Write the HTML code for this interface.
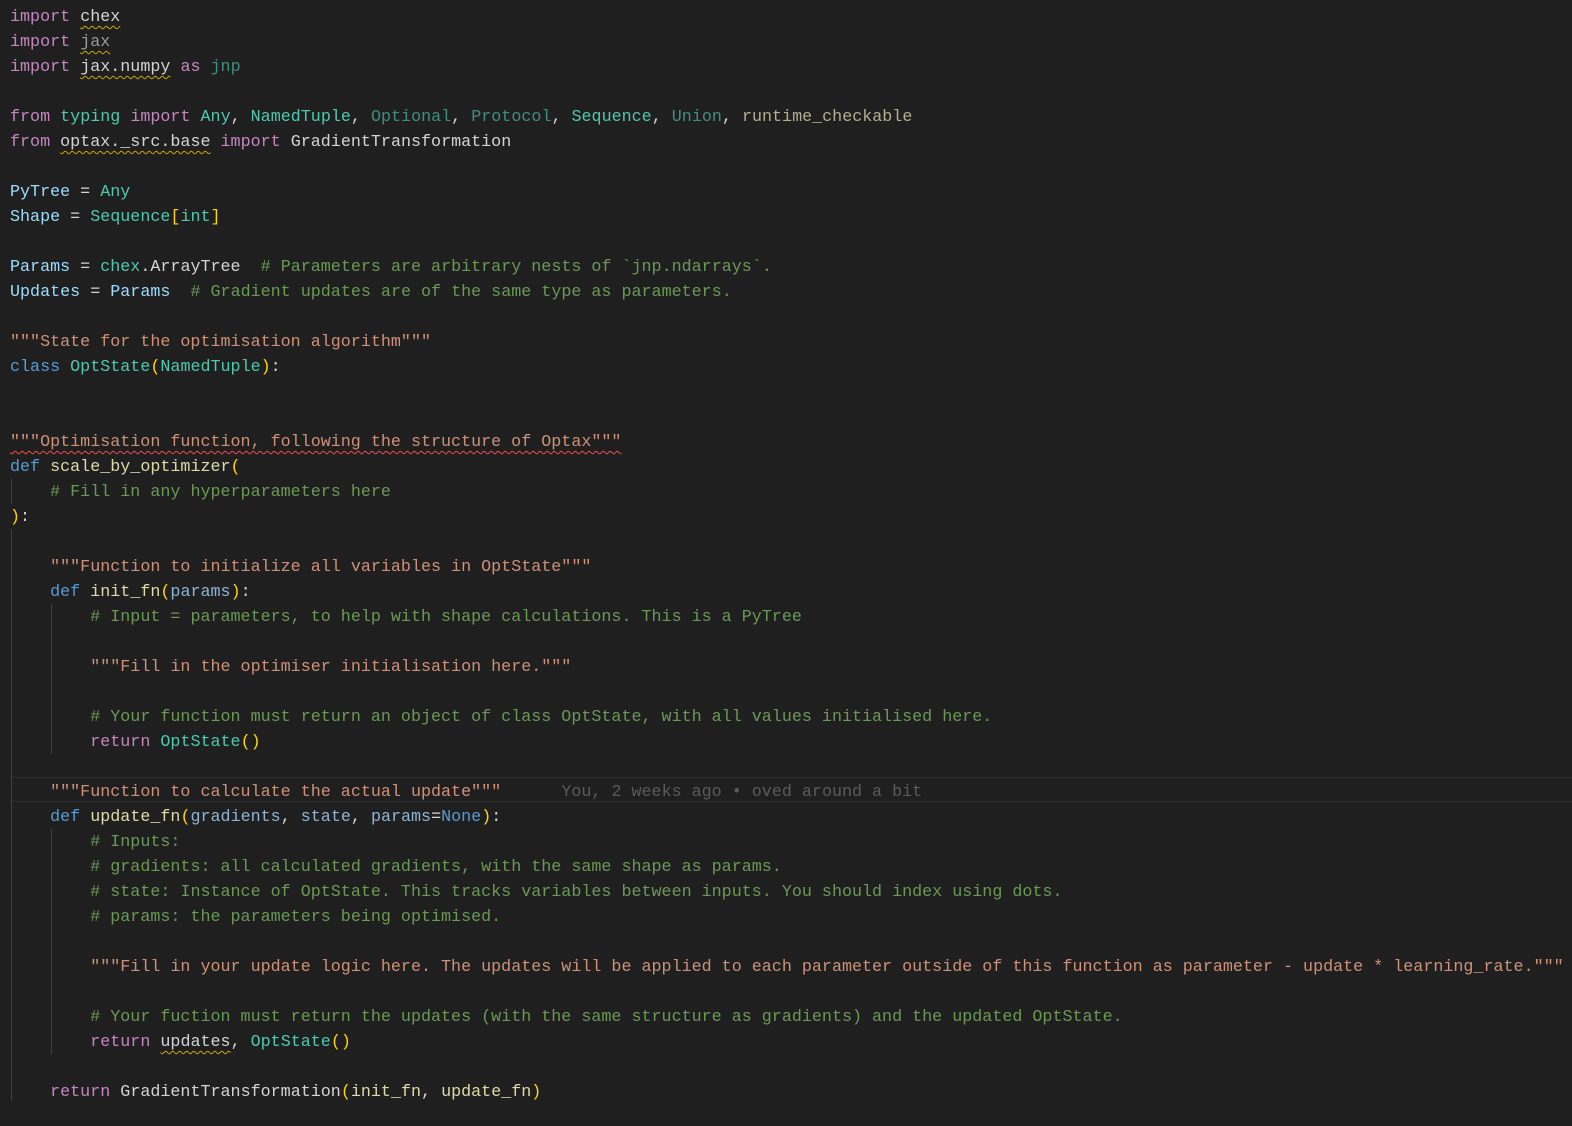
<!DOCTYPE html>
<html><head><meta charset="utf-8"><style>
body{margin:0;width:1572px;height:1126px;background:#1f1f1f;overflow:hidden;position:relative;font-family:"Liberation Mono",monospace;font-size:16.72px;color:#d4d4d4}
.c{position:absolute;left:10px;top:5px;white-space:pre;line-height:25px}
.k{color:#c586c0}.m{color:#4ec9b0}.md{color:#3f8f7e}.v{color:#9cdcfe}.s{color:#ce9178}.g{color:#6a9955}.f{color:#dcdcaa}.fd{color:#b0b090}
.b{color:#569cd6}.p{color:#ffd700}.dim{color:#9a9a9a}.pv{color:#8db4d4}
.w{text-decoration:underline wavy #cca700;text-decoration-thickness:1px;text-underline-offset:4px}
.r{text-decoration:underline wavy #f14c4c;text-decoration-thickness:1px;text-underline-offset:4px}
.gd{position:absolute;width:1px;background:#404040}
.hl{position:absolute;left:10px;right:0;top:777px;height:23px;border-top:1px solid #2c2c2c;border-bottom:1px solid #2c2c2c}
.bl{color:#5a5a5a}
</style></head><body>
<div class="hl"></div>
<div class="gd" style="left:11px;top:479px;height:25px"></div>
<div class="gd" style="left:11px;top:529px;height:572px"></div>
<div class="gd" style="left:51px;top:604px;height:150px"></div>
<div class="gd" style="left:51px;top:829px;height:225px"></div>
<div class="c"><span class="k">import</span> <span class="w">chex</span>
<span class="k">import</span> <span class="w dim">jax</span>
<span class="k">import</span> <span class="w">jax.numpy</span> <span class="k">as</span> <span class="md">jnp</span>

<span class="k">from</span> <span class="m">typing</span> <span class="k">import</span> <span class="m">Any</span>, <span class="m">NamedTuple</span>, <span class="md">Optional</span>, <span class="md">Protocol</span>, <span class="m">Sequence</span>, <span class="md">Union</span>, <span class="fd">runtime_checkable</span>
<span class="k">from</span> <span class="w">optax._src.base</span> <span class="k">import</span> GradientTransformation

<span class="v">PyTree</span> = <span class="m">Any</span>
<span class="v">Shape</span> = <span class="m">Sequence</span><span class="p">[</span><span class="m">int</span><span class="p">]</span>

<span class="v">Params</span> = <span class="m">chex</span>.ArrayTree  <span class="g"># Parameters are arbitrary nests of `jnp.ndarrays`.</span>
<span class="v">Updates</span> = <span class="v">Params</span>  <span class="g"># Gradient updates are of the same type as parameters.</span>

<span class="s">"""State for the optimisation algorithm"""</span>
<span class="b">class</span> <span class="m">OptState</span><span class="p">(</span><span class="m">NamedTuple</span><span class="p">)</span>:


<span class="s r">"""Optimisation function, following the structure of Optax"""</span>
<span class="b">def</span> <span class="f">scale_by_optimizer</span><span class="p">(</span>
    <span class="g"># Fill in any hyperparameters here</span>
<span class="p">)</span>:

    <span class="s">"""Function to initialize all variables in OptState"""</span>
    <span class="b">def</span> <span class="f">init_fn</span><span class="p">(</span><span class="pv">params</span><span class="p">)</span>:
        <span class="g"># Input = parameters, to help with shape calculations. This is a PyTree</span>

        <span class="s">"""Fill in the optimiser initialisation here."""</span>

        <span class="g"># Your function must return an object of class OptState, with all values initialised here.</span>
        <span class="k">return</span> <span class="m">OptState</span><span class="p">()</span>

    <span class="s">"""Function to calculate the actual update"""</span>      <span class="bl">You, 2 weeks ago • oved around a bit</span>
    <span class="b">def</span> <span class="f">update_fn</span><span class="p">(</span><span class="pv">gradients</span>, <span class="pv">state</span>, <span class="pv">params</span>=<span class="b">None</span><span class="p">)</span>:
        <span class="g"># Inputs:</span>
        <span class="g"># gradients: all calculated gradients, with the same shape as params.</span>
        <span class="g"># state: Instance of OptState. This tracks variables between inputs. You should index using dots.</span>
        <span class="g"># params: the parameters being optimised.</span>

        <span class="s">"""Fill in your update logic here. The updates will be applied to each parameter outside of this function as parameter - update * learning_rate."""</span>

        <span class="g"># Your fuction must return the updates (with the same structure as gradients) and the updated OptState.</span>
        <span class="k">return</span> <span class="w">updates</span>, <span class="m">OptState</span><span class="p">()</span>

    <span class="k">return</span> GradientTransformation<span class="p">(</span><span class="f">init_fn</span>, <span class="f">update_fn</span><span class="p">)</span>
</div>
</body></html>
